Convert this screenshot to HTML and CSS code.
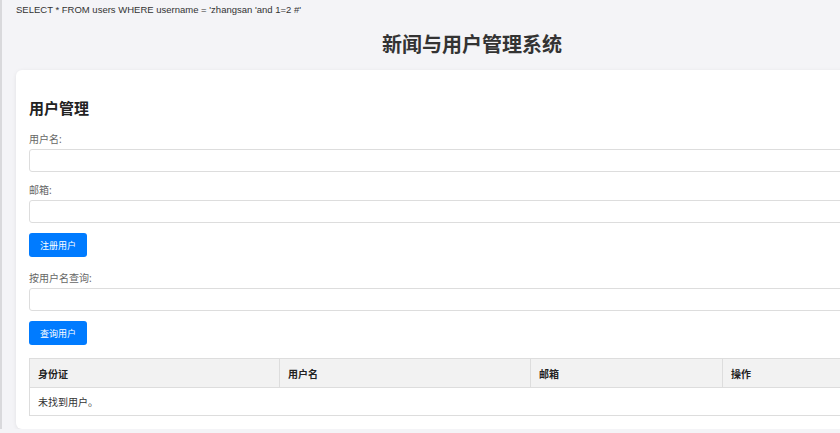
FILE: index.html
```html
<!DOCTYPE html>
<html lang="zh">
<head>
<meta charset="utf-8">
<title>新闻与用户管理系统</title>
<link rel="stylesheet" href="styles.css">
</head>
<body>
<div class="page">
  <div class="sql">SELECT * FROM users WHERE username = 'zhangsan 'and 1=2 #'</div>
  <h1 class="title">新闻与用户管理系统</h1>
  <div class="card">
    <h2 class="section-title">用户管理</h2>
    <div class="field">
      <label class="label">用户名:</label>
      <input class="input" type="text">
    </div>
    <div class="field">
      <label class="label">邮箱:</label>
      <input class="input" type="text">
    </div>
    <button class="btn btn-first">注册用户</button>
    <div class="field">
      <label class="label">按用户名查询:</label>
      <input class="input" type="text">
    </div>
    <button class="btn btn-second">查询用户</button>
    <table class="table">
      <colgroup>
        <col class="c1"><col class="c2"><col class="c3"><col class="c4">
      </colgroup>
      <thead>
        <tr><th>身份证</th><th>用户名</th><th>邮箱</th><th>操作</th></tr>
      </thead>
      <tbody>
        <tr><td colspan="4">未找到用户。</td></tr>
      </tbody>
    </table>
  </div>
</div>
</body>
</html>
```
FILE: styles.css
```css
html, body {
  margin: 0;
  padding: 0;
}
body {
  background: #f4f4f7;
  border-left: 2px solid #d9d9dc;
  overflow: hidden;
  font-family: "Noto Sans", "Noto Sans CJK SC", sans-serif;
  color: #333;
}
.page {
  width: 912px;
  margin-left: 14px;
}
.sql {
  padding-top: 3px;
  font-family: "Liberation Sans", "Noto Sans CJK SC", sans-serif;
  font-size: 9.5px;
  line-height: 14px;
  color: #333;
}
.title {
  margin: 14px 0 11px;
  text-align: center;
  font-size: 20px;
  line-height: 28px;
  font-weight: 700;
  color: #333;
}
.card {
  background: #fff;
  border-radius: 6px;
  box-shadow: 0 1px 4px rgba(0,0,0,0.08);
  padding: 13px;
}
.section-title {
  margin: 15px 0 14px;
  font-size: 15px;
  line-height: 20px;
  font-weight: 700;
  color: #222;
}
.field {
  margin-bottom: 10px;
}
.label {
  display: block;
  font-size: 10px;
  line-height: 14px;
  color: #666;
  margin-bottom: 3px;
}
.input {
  display: block;
  box-sizing: border-box;
  width: 100%;
  height: 23px;
  margin: 0;
  border: 1px solid #ddd;
  border-radius: 3px;
  background: #fff;
  padding: 0 6px;
}
.field + .field .label {
  padding-top: 1px;
}
.btn {
  display: block;
  box-sizing: border-box;
  width: 58px;
  height: 24px;
  padding: 0;
  border: none;
  border-radius: 3px;
  background: #007bff;
  color: #fff;
  font-family: "Noto Sans", "Noto Sans CJK SC", sans-serif;
  font-size: 9px;
}
.btn-first {
  margin-bottom: 14px;
}
.btn-second {
  margin-bottom: 13px;
}
.table {
  width: 100%;
  border-collapse: collapse;
  table-layout: fixed;
  font-size: 10px;
}
.c1 { width: 250px; }
.c2 { width: 251px; }
.c3 { width: 192px; }
.table th {
  height: 28px;
  padding: 0 8px;
  background: #f2f2f2;
  border: 1px solid #ddd;
  text-align: left;
  font-weight: 700;
  color: #222;
}
.table td {
  height: 27px;
  padding: 0 8px;
  border: 1px solid #ddd;
  color: #333;
}
```
